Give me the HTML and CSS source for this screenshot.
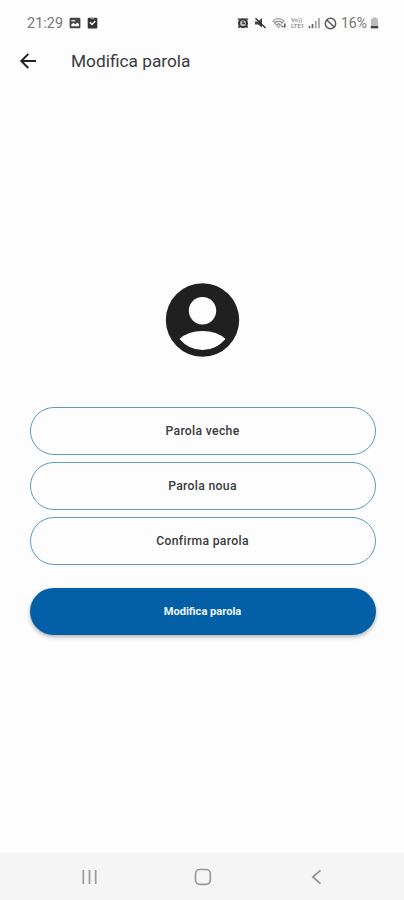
FILE: index.html
```html
<!DOCTYPE html>
<html lang="ro">
<head>
<meta charset="utf-8">
<title>Modifica parola</title>
<link rel="stylesheet" href="styles.css">
</head>
<body>
<div class="screen">
  <div class="status">
    <span class="clock">21:29</span>
    <svg class="notif-image" width="12" height="12" viewBox="0 0 12 12"><rect x=".6" y=".8" width="10.800" height="10.400" rx="1.2" fill="#444"/><path d="M2.3 4.5H10M2.3 9.2V7.5L4.5 5.7 6.3 7.4 8.2 5.5 9.9 7V9.2Z" fill="#fff"/><path d="M2.3 3h4v1.4h-4z" fill="#ddd"/></svg>
    <svg class="notif-check" width="11" height="12" viewBox="0 0 11 12"><rect x=".7" y=".7" width="9.6" height="10.8" rx="1" fill="#333"/><path d="M2.8 5.2 5 7.4 8.3 4" fill="none" stroke="#fff" stroke-width="1.4"/><path d="M3.6 1.7h3.8" stroke="#999"/></svg>
    <div class="indicators">
      <svg width="12" height="12" viewBox="0 0 12 12"><path d="M.8 1.2h3v2h-3zM8.2 1.2h3v2h-3zM1 9h2v2H1zM9 9h2v2H9z" fill="#666"/><circle cx="6" cy="6.2" r="4" fill="#bbb" stroke="#333" stroke-width="2"/><path d="M6 4v2.5h2" fill="none" stroke="#333" stroke-width="1.2"/></svg>
      <svg class="mute" width="13" height="12" viewBox="0 0 13 12"><path d="M1 4.5h3L8 1v9.5L4 7.5H1Z" fill="#444"/><path d="M1.5 1.2 11.5 11" stroke="#333" stroke-width="1.5"/></svg>
      <svg class="wifi" width="15" height="12" viewBox="0 0 15 12"><path d="M1 4Q6.5-1 12 4L6.5 10.5Z" fill="none" stroke="#aaa" stroke-width="1.2"/><path d="M3 5.5Q6.5 3 10 5.5M5 7.4Q6.5 6.3 8 7.4" fill="none" stroke="#777" stroke-width="1.2"/><path d="M9.5 9.5h2M12.8 6.5v4" stroke="#555" stroke-width="1.5"/></svg>
      <span class="volte"><span>Vo))</span><span>LTE1</span></span>
      <svg class="signal" width="13" height="12" viewBox="0 0 13 12"><path d="M1.5 9v2.3M4.5 7v4.3" stroke="#666" stroke-width="1.7"/><path d="M7.8 4v7.3M11 1v10.3" stroke="#aaa" stroke-width="1.9"/></svg>
      <svg class="blocked" width="13" height="13" viewBox="0 0 13 13"><circle cx="6.5" cy="6.5" r="5.2" fill="none" stroke="#555" stroke-width="1.4"/><path d="M2.8 3 10.2 10" stroke="#555" stroke-width="1.4"/></svg>
      <span class="percent">16%</span>
      <svg class="battery" width="9" height="12" viewBox="0 0 9 12"><path d="M3 .5h3v1H8V9H1V1.500H3Z" fill="#bbb"/><path d="M.8 9h7.4v2.400H.8z" fill="#444"/></svg>
    </div>
  </div>
  <header class="appbar">
    <svg width="18" height="18" viewBox="0 0 18 18"><path d="M9.300 2 2.300 9l7 7M2.600 9H17" fill="none" stroke="#222" stroke-width="1.9"/></svg>
    <h1>Modifica parola</h1>
  </header>
  <main class="content">
    <svg class="avatar" width="75" height="75" viewBox="0 0 75 75"><circle cx="37.500" cy="37" r="36.700" fill="#202021"/><circle cx="37.500" cy="27.800" r="13.700" fill="#fdfdfe"/><path d="M14.500 56Q23 48 37.500 48T60.500 56Q51 67 37.500 67T14.500 56Z" fill="#fdfdfe"/></svg>
    <div class="fields">
      <div class="field">Parola veche</div>
      <div class="field">Parola noua</div>
      <div class="field">Confirma parola</div>
    </div>
    <button class="submit">Modifica parola</button>
  </main>
  <nav class="navbar">
    <svg width="18" height="18" viewBox="0 0 18 18"><path d="M2.300 2v14M8.500 2v14M14.700 2v14" stroke="#999" stroke-width="1.700"/></svg>
    <svg class="home" width="18" height="18" viewBox="0 0 18 18"><rect x="1.500" y="1.500" width="14.800" height="14.800" rx="4.200" fill="none" stroke="#999" stroke-width="1.700"/></svg>
    <svg width="18" height="18" viewBox="0 0 18 18"><path d="M12.500 2.300 4.800 9l7.700 6.700" fill="none" stroke="#929292" stroke-width="1.700"/></svg>
  </nav>
</div>
</body>
</html>
```
FILE: styles.css
```css
* { box-sizing: border-box; }
body { margin: 0; font-family: Roboto, "Liberation Sans", sans-serif; background: #fdfdfe; }
svg { display: block; flex: none; }
.screen { display: flex; flex-direction: column; width: 404px; height: 900px; }
.status { display: flex; align-items: center; height: 46px; padding: 0 25px 0 27px; color: #777; }
.clock { width: 42px; font-size: 14.3px; letter-spacing: 0.1px; }
.notif-check { margin-left: 6px; }
.indicators { display: flex; align-items: center; margin-left: auto; }
.mute { margin-left: 5px; }
.wifi { margin-left: 5px; }
.volte { display: flex; flex-direction: column; width: 16px; margin-left: 4px; font-size: 6px; line-height: 6px; font-weight: 700; color: #999; }
.signal { margin-left: 1px; }
.blocked { margin-left: 3px; }
.percent { width: 28px; margin-left: 4px; margin-right: 1px; font-size: 14px; white-space: nowrap; }
.appbar { display: flex; align-items: center; height: 30px; padding-left: 19px; }
.appbar h1 { margin: 0 0 0 34px; font-size: 17.3px; font-weight: 400; color: #3b3b3d; line-height: 30px; }
.content { flex: 1; display: flex; flex-direction: column; align-items: center; padding: 207px 28px 0 29px; }
.fields { display: flex; flex-direction: column; gap: 7px; width: 346px; margin-top: 49px; }
.field { display: flex; align-items: center; justify-content: center; height: 48px; border: 1px solid #5f9bbd; border-radius: 24px; font-size: 12.200px; letter-spacing: 0.32px; font-weight: 500; color: #3a3a3a; }
.submit { width: 346px; height: 47px; margin-top: 23px; padding: 0; border: 0; border-radius: 24px; background: #0360a6; color: #eef5fb; font: 700 11.100px Roboto, "Liberation Sans", sans-serif; box-shadow: 0 2px 4px rgba(0, 0, 0, 0.3); }
.navbar { display: flex; align-items: center; justify-content: space-between; height: 47px; padding: 0 78px 0 81px; background: #f5f5f5; }
.home { margin-right: 2px; }
```
